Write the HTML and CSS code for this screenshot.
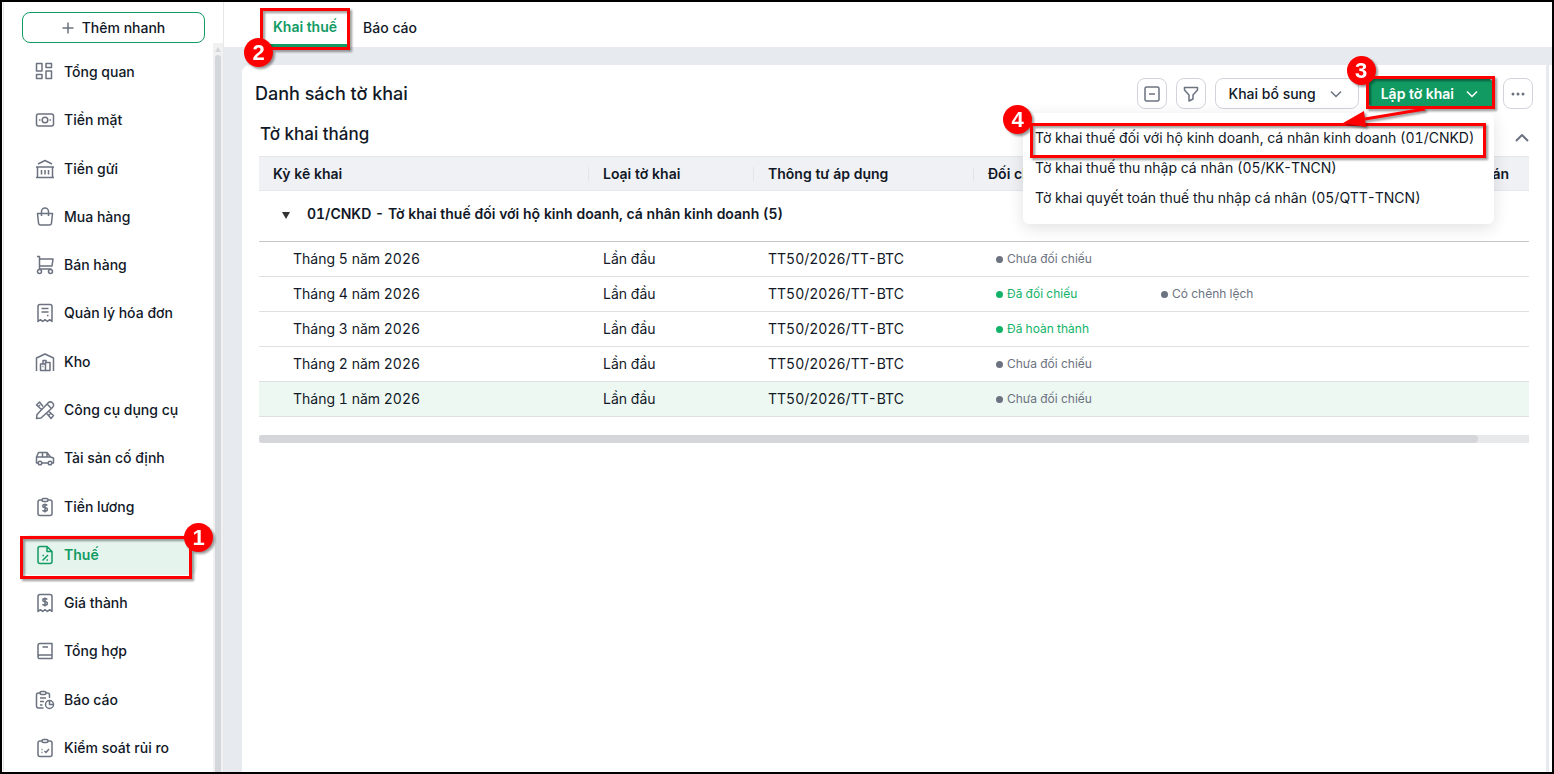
FILE: index.html
```html
<!DOCTYPE html>
<html lang="vi">
<head>
	<meta charset="utf-8">
	<title>Danh sách tờ khai</title>
	<meta name="viewport" content="width=device-width, initial-scale=1">
	<link rel="stylesheet" href="styles.css">
</head>
<body>
<div class="page">
	<aside class="sidebar">
		<button class="quick-add" type="button">
			<svg class="plus" viewBox="0 0 12 12"><path d="M6 0.500v11M0.500 6h11"/></svg>
			Thêm nhanh
		</button>
		<div class="nav-wrap">
			<nav class="nav">
				<a href="#"><svg class="icon" viewBox="0 0 20 20"><path d="M1.500 1.500h5.500v7.500h-5.500zM1.500 12.500h5.500v4h-5.500zM11 1.500h5.500v4h-5.500zM11 9h5.500v7.500h-5.500z"/></svg>Tổng quan</a>
				<a href="#"><svg class="icon" viewBox="0 0 20 20"><rect x="1.500" y="4" width="17" height="12" rx="2"/><circle cx="10" cy="10" r="2.800"/><path d="M4 10h1.500M14.500 10h1.500"/></svg>Tiền mặt</a>
				<a href="#"><svg class="icon" viewBox="0 0 20 20"><path d="M3 5l7-3.500l7 3.500M1 8h18M1 18.500h18M2.500 8v10.500M17.500 8v10.500M6.500 11v4.500M10 11v4.500M13.500 11v4.500"/></svg>Tiền gửi</a>
				<a href="#"><svg class="icon" viewBox="0 0 20 20"><path d="M2.500 6.500h15l-1 9.500q-.2 2-2.200 2h-8.600q-2 0-2.200-2zM6.500 9v-4.500a3.500 3.500 0 0 1 7 0v4.500"/></svg>Mua hàng</a>
				<a href="#"><svg class="icon" viewBox="0 0 20 20"><path d="M2 1.500h2.500v12.500h12M4.500 4h13.500l-1 7h-12.500"/><circle cx="4.500" cy="16.500" r="2"/><circle cx="15.500" cy="16.500" r="2"/></svg>Bán hàng</a>
				<a href="#"><svg class="icon" viewBox="0 0 20 20"><path d="M3 18.500v-15q0-2 2-2h10q2 0 2 2v15l-2.300-1.800-2.300 1.800-2.400-1.800-2.300 1.800-2.300-1.800zM6.500 5.500h7M6.500 9h7M12 12.500h1.500"/></svg>Quản lý hóa đơn</a>
				<a href="#"><svg class="icon" viewBox="0 0 20 20"><path d="M1.500 19v-13l8.500-4 8.500 4v13M5.500 18.500v-6.500h5v6.500zM10.500 18.500v-8h4.500v8zM8 12v-3.500h3v2M7.500 14.500h1"/></svg>Kho</a>
				<a href="#"><svg class="icon" viewBox="0 0 20 20"><path d="M1.500 18.500l.5-4 11-11.500q1.500-1.500 3.500-1l2 2q.5 2-1 3.500l-11.500 10.500zM12.500 4.500l3.500 3.500M8 6.500l-3.500-4.500-3 3 5 4.500M5 5l-1.500 1.500M11.500 13l4.500 5.500 2.500-3-5-4.500M14 15l2-2"/></svg>Công cụ dụng cụ</a>
				<a href="#"><svg class="icon" viewBox="0 0 20 20"><path d="M3 15h-1.500v-6l2-4.500h8.500l3.500 4.500 3 1v5h-1.500M7 15h6M1.500 9h14M7.500 4.500v4.500M12 5v4"/><circle cx="5" cy="15" r="1.800"/><circle cx="15" cy="15" r="1.800"/></svg>Tài sản cố định</a>
				<a href="#"><svg class="icon" viewBox="0 0 20 20"><path d="M7 3h-2q-2 0-2 2v11.500q0 2 2 2h10q2 0 2-2v-11.500q0-2-2-2h-2"/><rect x="7" y="1.500" width="6" height="3" rx="1.500"/><path d="M12.300 8.500q-.8-.9-2.300-.9-2.200 0-2.200 1.600 0 1.300 2.200 1.600 2.400.3 2.400 1.800t-2.400 1.600q-1.700 0-2.500-1M10 6.500v9"/></svg>Tiền lương</a>
				<a href="#" class="active"><svg class="icon" viewBox="0 0 20 20"><path d="M12 1.500h-7q-2 0-2 2v13q0 2 2 2h10q2 0 2-2v-10zM12 1.500v5h5M13 10l-5.500 5.500M7.500 10.500h1.500M11.500 15h1.500"/></svg>Thuế<span class="mark mark-nav"><span class="step">1</span></span></a>
				<a href="#"><svg class="icon" viewBox="0 0 20 20"><path d="M3 18.500v-15q0-2 2-2h10q2 0 2 2v15l-2.300-1.800-2.300 1.800-2.400-1.800-2.300 1.800-2.300-1.800zM12.300 6.500q-.8-.9-2.300-.9-2.200 0-2.200 1.600 0 1.300 2.200 1.600 2.400.3 2.400 1.800t-2.400 1.600q-1.700 0-2.500-1M10 4.500v9"/></svg>Giá thành</a>
				<a href="#"><svg class="icon" viewBox="0 0 20 20"><path d="M17 14h-12q-2 0-2 1.800t2 1.700h12v-15h-12q-2 0-2 2v11.500M7.500 6h5.500"/></svg>Tổng hợp</a>
				<a href="#"><svg class="icon" viewBox="0 0 20 20"><path d="M5.500 3h-2q-2 0-2 2v11q0 2 2 2h5M11 3h1.500q2 0 2 2v3M5 8h6M5 11.500h4M5 15h2.500"/><rect x="5" y="1.500" width="6" height="3" rx="1.500"/><circle cx="14.500" cy="14.500" r="4"/><path d="M14.500 10.500v4h4"/></svg>Báo cáo</a>
				<a href="#"><svg class="icon" viewBox="0 0 20 20"><path d="M7 3h-2q-2 0-2 2v11.500q0 2 2 2h10q2 0 2-2v-11.500q0-2-2-2h-2M9.500 13l1.500 1.500 3-3.500M6.500 11.500h1M6.500 14.500h1"/><rect x="7" y="1.500" width="6" height="3" rx="1.500"/></svg>Kiểm soát rủi ro</a>
			</nav>
			<div class="scrollbar">
				<svg class="scroll-up" viewBox="0 0 6 5"><path d="M3 0l3 5h-6z"/></svg>
				<div class="scroll-thumb"></div>
			</div>
		</div>
	</aside>

	<main class="main">
		<div class="tabs">
			<a href="#" class="tab current">Khai thuế<span class="mark mark-tab"><span class="step">2</span></span></a>
			<a href="#" class="tab">Báo cáo</a>
		</div>
		<div class="content">
			<section class="card">
				<div class="toolbar">
					<h1>Danh sách tờ khai</h1>
					<div class="actions">
						<button class="btn square" type="button" aria-label="Thu gọn"><svg class="icon" viewBox="0 0 20 20"><rect x="3" y="3" width="14" height="14" rx="1.500"/><path d="M7 10h6"/></svg></button>
						<button class="btn square" type="button" aria-label="Lọc"><svg class="icon" viewBox="0 0 20 20"><path d="M3.500 3.500h13v2.500l-4.500 5v4l-4 2v-6l-4.500-5z"/></svg></button>
						<button class="btn" type="button">Khai bổ sung<svg class="caret" viewBox="0 0 12 8"><path d="M1 1.500l5 5 5-5"/></svg></button>
						<div class="dropdown">
							<button class="btn primary" type="button">Lập tờ khai<svg class="caret" viewBox="0 0 12 8"><path d="M1 1.500l5 5 5-5"/></svg></button>
							<ul class="menu">
								<li><a href="#">Tờ khai thuế đối với hộ kinh doanh, cá nhân kinh doanh (01/CNKD)</a><span class="mark mark-menu"><span class="step">4</span></span></li>
								<li><a href="#">Tờ khai thuế thu nhập cá nhân (05/KK-TNCN)</a></li>
								<li><a href="#">Tờ khai quyết toán thuế thu nhập cá nhân (05/QTT-TNCN)</a></li>
							</ul>
							<span class="mark mark-button"><span class="step">3</span></span>
							<svg class="arrow" viewBox="0 0 84 22"><path class="arrow-line" d="M82 3L22 13"/><path class="arrow-head" d="M0 17L21 5l2 16z"/></svg>
						</div>
						<button class="btn square" type="button" aria-label="Thêm"><svg class="dots" viewBox="0 0 14 4"><circle cx="2" cy="2" r="1.500"/><circle cx="7" cy="2" r="1.500"/><circle cx="12" cy="2" r="1.500"/></svg></button>
					</div>
				</div>

				<div class="section-head">
					<h2>Tờ khai tháng</h2>
					<svg class="collapse" viewBox="0 0 14 9"><path d="M1 8l6-6 6 6"/></svg>
				</div>

				<table class="list">
					<colgroup>
						<col class="c-period"><col class="c-type"><col class="c-rule"><col class="c-check"><col class="c-diff"><col>
					</colgroup>
					<thead>
						<tr>
							<th>Kỳ kê khai</th>
							<th>Loại tờ khai</th>
							<th>Thông tư áp dụng</th>
							<th>Đối chiếu</th>
							<th></th>
							<th class="right">Thanh toán</th>
						</tr>
					</thead>
					<tbody>
						<tr class="group">
							<td colspan="6"><svg class="triangle" viewBox="0 0 8 7"><path d="M0 0h8l-4 7z"/></svg>01/CNKD - Tờ khai thuế đối với hộ kinh doanh, cá nhân kinh doanh (5)</td>
						</tr>
						<tr>
							<td>Tháng 5 năm 2026</td><td>Lần đầu</td><td>TT50/2026/TT-BTC</td>
							<td><span class="status">Chưa đối chiếu</span></td><td></td><td></td>
						</tr>
						<tr>
							<td>Tháng 4 năm 2026</td><td>Lần đầu</td><td>TT50/2026/TT-BTC</td>
							<td><span class="status done">Đã đối chiếu</span></td><td><span class="status">Có chênh lệch</span></td><td></td>
						</tr>
						<tr>
							<td>Tháng 3 năm 2026</td><td>Lần đầu</td><td>TT50/2026/TT-BTC</td>
							<td><span class="status done">Đã hoàn thành</span></td><td></td><td></td>
						</tr>
						<tr>
							<td>Tháng 2 năm 2026</td><td>Lần đầu</td><td>TT50/2026/TT-BTC</td>
							<td><span class="status">Chưa đối chiếu</span></td><td></td><td></td>
						</tr>
						<tr class="selected">
							<td>Tháng 1 năm 2026</td><td>Lần đầu</td><td>TT50/2026/TT-BTC</td>
							<td><span class="status">Chưa đối chiếu</span></td><td></td><td></td>
						</tr>
					</tbody>
				</table>
				<div class="h-scroll"><div class="h-thumb"></div></div>
			</section>
		</div>
	</main>
</div>
</body>
</html>
```
FILE: styles.css
```css
* {
	box-sizing: border-box;
}

body {
	margin: 0;
	font-family: Inter, "Liberation Sans", sans-serif;
	font-size: 14px;
	line-height: 20px;
	color: #111827;
}

a {
	color: inherit;
	text-decoration: none;
}

svg {
	flex: none;
	fill: none;
	stroke: #6b7280;
	stroke-width: 1.5;
	stroke-linejoin: round;
}

.page {
	display: flex;
	height: 100vh;
	border: 2px solid #000;
	overflow: hidden;
	background: #fff;
}

.icon {
	width: 20px;
	height: 20px;
}

/* sidebar */
.sidebar {
	display: flex;
	flex-direction: column;
	flex: none;
	width: 221px;
	margin-left: 1px;
	padding-top: 10px;
	border-left: 1px solid #e5e7eb;
	border-right: 1px solid #e5e7eb;
}

.quick-add {
	display: flex;
	align-items: center;
	justify-content: center;
	gap: 8px;
	height: 31px;
	margin: 0 18px;
	border: 1px solid #119b63;
	border-radius: 8px;
	background: #fff;
	color: #111827;
	font: inherit;
	font-weight: 500;
}

.plus {
	width: 12px;
	height: 12px;
}

.nav-wrap {
	display: flex;
	flex: 1;
}

.nav {
	display: flex;
	flex-direction: column;
	justify-content: space-around;
	flex: 1;
	padding: 5px 16px 0 18px;
}

.nav a {
	position: relative;
	display: flex;
	align-items: center;
	gap: 9px;
	height: 40px;
	padding-left: 13px;
	border-radius: 8px;
	font-weight: 500;
}

.nav .active {
	background: #e6f4ee;
	color: #119b63;
	font-weight: 600;
}

.active svg {
	stroke: #119b63;
}

.scrollbar {
	display: flex;
	flex-direction: column;
	align-items: center;
	gap: 3px;
	width: 10px;
	padding-top: 4px;
	background: #f1f1f2;
}

.scroll-up {
	width: 6px;
	height: 5px;
	fill: #d3d7dc;
	stroke: none;
}

.scroll-thumb {
	flex: 1;
	width: 6px;
	border-radius: 3px 3px 0 0;
	background: #d3d7dc;
}

/* main area */
.main {
	display: flex;
	flex-direction: column;
	flex: 1;
	min-width: 0;
}

.tabs {
	display: flex;
	height: 45px;
	padding-left: 36px;
}

.tab {
	position: relative;
	display: flex;
	align-items: center;
	padding: 7px 13px 0;
	font-weight: 500;
}

.tab.current {
	border-bottom: 3px solid #119b63;
	color: #119b63;
	font-weight: 600;
}

.content {
	display: flex;
	flex: 1;
	padding: 18px 6px 0 18px;
	background: #e7eaef;
}

.card {
	flex: 1;
	min-width: 0;
	padding: 13px 17px;
	border-radius: 8px 0 0 0;
	background: #fff;
	/* thin gutter with the page edge behind it */
	box-shadow: 3px 0 #e7eaef, 6px 0 #fff;
}

.toolbar {
	display: flex;
	align-items: center;
	justify-content: space-between;
	margin: 0 -4px;
}

h1, h2 {
	margin: 0;
	font-weight: 500;
}

h1 {
	font-size: 18px;
}

h2 {
	font-size: 17px;
}

.actions {
	display: flex;
	gap: 9px;
}

.btn {
	display: flex;
	align-items: center;
	justify-content: center;
	gap: 14px;
	height: 31px;
	padding: 0 16px 0 13px;
	border: 1px solid #d1d5db;
	border-radius: 8px;
	background: #fff;
	color: #111827;
	font: inherit;
	font-weight: 500;
}

.square {
	width: 30px;
	padding: 0;
}

.caret {
	width: 12px;
	height: 8px;
}

.dots {
	width: 14px;
	height: 4px;
	fill: #6b7280;
	stroke: none;
}

.primary {
	gap: 12px;
	padding: 0 15px 0 12px;
	border-color: #119b63;
	background: #119b63;
	color: #fff;
	font-weight: 600;
}

.primary svg {
	stroke: #fff;
}

.dropdown {
	position: relative;
}

.menu {
	position: absolute;
	z-index: 1;
	top: 35px;
	right: 0;
	min-width: 471px;
	margin: 0;
	padding: 10px 12px 11px;
	border-radius: 6px;
	background: #fff;
	box-shadow: 0 4px 16px rgba(0, 0, 0, 0.12);
	font-variant-numeric: tabular-nums;
	list-style: none;
	white-space: nowrap;
}

.menu li {
	position: relative;
	line-height: 30px;
}

.section-head {
	display: flex;
	align-items: center;
	justify-content: space-between;
	height: 47px;
	padding-top: 3px;
	padding-left: 1px;
}

.collapse {
	width: 14px;
	height: 9px;
	margin-top: 6px;
	stroke-width: 2;
}

/* declarations table */
.list {
	width: 100%;
	border-collapse: separate;
	border-spacing: 0;
	table-layout: fixed;
	font-variant-numeric: tabular-nums;
}

.c-period {
	width: 330px;
}

.c-type {
	width: 165px;
}

.c-rule {
	width: 220px;
}

.c-check, .c-diff {
	width: 165px;
}

th {
	height: 35px;
	padding: 0 14px;
	border-top: 1px solid #e5e7eb;
	border-bottom: 1px solid #e5e7eb;
	background: linear-gradient(#e1e4e8, #e1e4e8) right center / 1px 14px no-repeat #f0f1f5;
	font-weight: 600;
	text-align: left;
}

th.right {
	padding-right: 20px;
	background: #f0f1f5;
	text-align: right;
}

td {
	height: 35px;
	padding: 0 14px;
	border-bottom: 1px solid #dfe0e2;
}

td:first-child {
	padding-left: 34px;
}

.group td {
	height: 51px;
	padding: 0 26px 4px 23px;
	border-bottom-color: #c4c6c9;
	font-weight: 600;
}

.group td:first-child {
	padding-left: 23px;
}

.triangle {
	width: 8px;
	height: 7px;
	margin-right: 17px;
	fill: #333;
	stroke: none;
}

.selected td {
	background: #eef8f3;
}

.status {
	display: flex;
	align-items: center;
	gap: 4px;
	padding-left: 8px;
	color: #6b7280;
	font-size: 12px;
}

.status::before {
	content: "";
	width: 7px;
	height: 7px;
	border-radius: 50%;
	background: currentColor;
}

.done {
	color: #12b368;
}

.h-scroll {
	height: 8px;
	margin-top: 18px;
	background: #e8e9eb;
}

.h-thumb {
	width: 96%;
	height: 8px;
	border-radius: 4px;
	background: #d5d6da;
}

/* red guide marks */
.mark {
	position: absolute;
	z-index: 2;
	border: 3px solid #f00;
	filter: drop-shadow(2px 2px 1px rgba(0, 0, 0, 0.4));
	pointer-events: none;
}

.step {
	position: absolute;
	width: 29px;
	height: 29px;
	border-radius: 50%;
	background: #f00;
	color: #fff;
	font: bold 22px/29px "Liberation Sans", sans-serif;
	text-align: center;
}

.mark-nav {
	top: 1px;
	right: 5px;
	bottom: -4px;
	left: -2px;
}

.mark-nav .step {
	top: -16px;
	right: -24px;
}

.mark-tab {
	top: 6px;
	right: 0;
	bottom: -6px;
	left: 0;
}

.mark-tab .step {
	bottom: -20px;
	left: -19px;
}

.mark-button {
	top: -2px;
	right: -1px;
	bottom: 0;
	left: -2px;
}

.mark-button .step {
	top: -23px;
	left: -22px;
}

.mark-menu {
	top: 0;
	right: -4px;
	bottom: -5px;
	left: -5px;
}

.mark-menu .step {
	top: -21px;
	left: -30px;
}

.arrow {
	position: absolute;
	z-index: 3;
	top: 28px;
	right: 67px;
	width: 84px;
	height: 22px;
	overflow: visible;
	filter: drop-shadow(2px 2px 1px rgba(0, 0, 0, 0.4));
}

.arrow-line {
	stroke: #f00;
	stroke-width: 3;
}

.arrow-head {
	fill: #f00;
	stroke: none;
}
```
